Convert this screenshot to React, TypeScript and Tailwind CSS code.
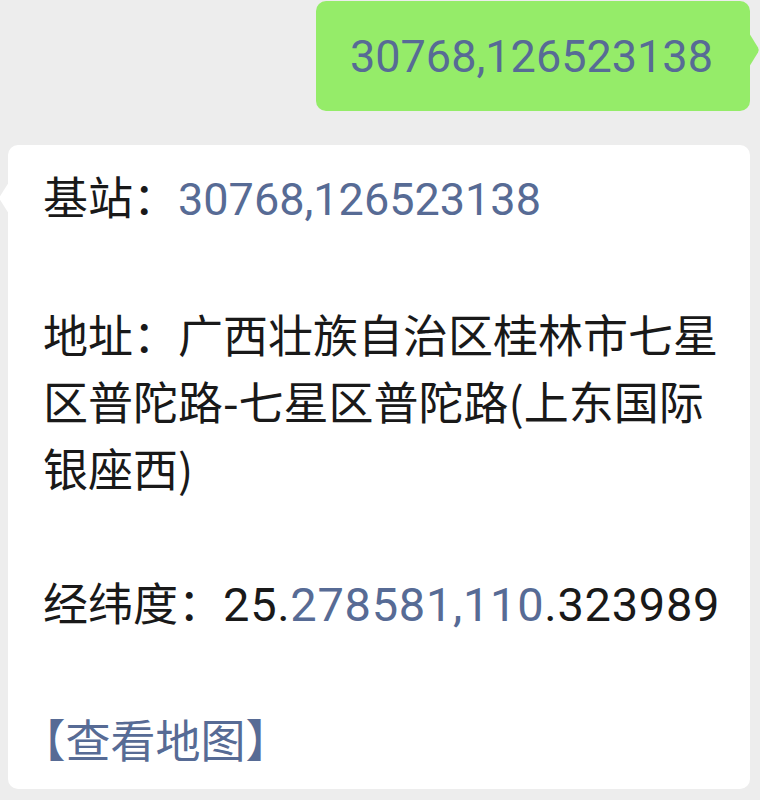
import React from 'react';

const Num: React.FC<{ children: React.ReactNode; className?: string }> = ({ children, className = '' }) => (
  <span className={`font-['Roboto',sans-serif] ${className}`}>{children}</span>
);

const App: React.FC = () => {
  return (
    <div className="min-h-[800px] w-[760px] bg-[#ededed] pt-px font-['Noto_Sans_CJK_SC',sans-serif] text-[45px] leading-[67px] text-[#191919]">
      {/* Sent message */}
      <div className="flex justify-end pr-[10px]">
        <div className="relative flex h-[110px] w-[434px] items-center rounded-[10px] bg-[#95ec69] pl-[34px]">
          <Num className="text-[#576b95]">30768,126523138</Num>
          <svg className="absolute top-[32px] -right-[10px]" width="11" height="34" viewBox="0 0 11 34">
            <path d="M0 0 L9 14.5 Q10.5 17 9 19.5 L0 34 Z" fill="#95ec69" />
          </svg>
        </div>
      </div>

      {/* Received message */}
      <div className="mt-[34px] pl-[8px]">
        <div className="relative w-[742px] rounded-[10px] bg-white pt-[17px] pb-[17px] pl-[35px] pr-[23px]">
          <svg className="absolute top-[37px] -left-[9px]" width="10" height="32" viewBox="0 0 10 32">
            <path d="M10 0 L1.2 14 Q0 16 1.2 18 L10 32 Z" fill="#ffffff" />
          </svg>
          <div className="w-[684px]">
            <div>
              基站：<Num className="text-[#576b95]">30768,126523138</Num>
            </div>
            <div className="h-[67px]" />
            <div>
              地址：广西壮族自治区桂林市七星区普陀路-七星区普陀路(上东国际银座西)
            </div>
            <div className="h-[67px]" />
            <div className="whitespace-nowrap">
              经纬度：<Num className="text-[47px] tracking-[0.7px]">25.</Num>
              <Num className="text-[47px] tracking-[0.7px] text-[#576b95]">278581,110</Num>
              <Num className="text-[47px] tracking-[0.7px]">.323989</Num>
            </div>
            <div className="h-[67px]" />
            <div className="text-[#576b95] [font-feature-settings:'halt']">【查看地图】</div>
          </div>
        </div>
      </div>
    </div>
  );
};

export default App;
